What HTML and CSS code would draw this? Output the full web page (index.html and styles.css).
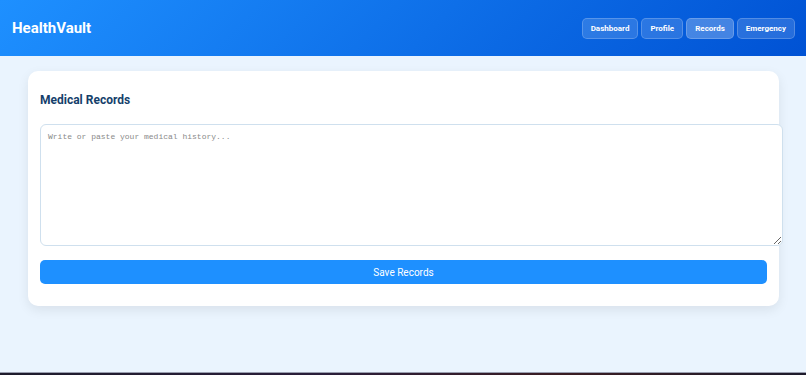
FILE: index.html
```html
<!DOCTYPE html>
<html lang="en">
<head>
    <meta charset="UTF-8">
    <meta name="viewport" content="width=device-width, initial-scale=1.0">
    <title>HealthVault - Records</title>
    <link rel="stylesheet" href="styles.css">
</head>
<body>
    <header class="topbar">
        <div class="logo">HealthVault</div>
        <nav class="nav">
            <button class="nav-btn">Dashboard</button>
            <button class="nav-btn">Profile</button>
            <button class="nav-btn active">Records</button>
            <button class="nav-btn">Emergency</button>
        </nav>
    </header>

    <main class="content">
        <section class="card">
            <h2>Medical Records</h2>
            <textarea id="records" placeholder="Write or paste your medical history..."></textarea>
            <button class="save-btn" id="saveBtn">Save Records</button>
        </section>
    </main>

    <footer class="footer"></footer>
</body>
</html>
```

FILE: styles.css
```css
body {
    font-family: Roboto, "Liberation Sans", Arial, sans-serif;
    background-color: #eaf4fe;
    margin: 0;
    padding: 0;
}

.topbar {
    height: 56px;
    display: flex;
    align-items: center;
    justify-content: space-between;
    padding: 0 11px 0 12px;
    background: linear-gradient(135deg, #1e90ff, #0052d4);
}

.logo {
    color: #fff;
    font-size: 15px;
    font-weight: bold;
}

.nav {
    display: flex;
    gap: 3px;
}

.nav-btn {
    height: 21px;
    padding: 0 8px;
    border: 1px solid rgba(255, 255, 255, 0.2);
    border-radius: 5px;
    background-color: rgba(255, 255, 255, 0.15);
    color: #fff;
    font-family: Roboto, "Liberation Sans", Arial, sans-serif;
    font-size: 8px;
    font-weight: bold;
    cursor: pointer;
}

.nav-btn.active {
    background-color: rgba(255, 255, 255, 0.26);
}

.content {
    height: 301px;
    padding: 15px 27px 0 28px;
}

.card {
    background-color: #fff;
    border-radius: 10px;
    padding: 12px 12px 22px;
    box-shadow: 0 4px 12px rgba(0, 0, 0, 0.08);
}

.card h2 {
    margin: 10px 0 16px;
    font-size: 12px;
    line-height: 15px;
    color: #153f6b;
}

textarea {
    display: block;
    width: 100%;
    height: 106px;
    padding: 7px;
    border: 1px solid #cfe0ee;
    border-radius: 6px;
    font-family: "Liberation Mono", "Courier New", monospace;
    font-size: 8px;
    color: #333;
    resize: vertical;
}

textarea::placeholder {
    color: #8a8a8a;
}

.save-btn {
    display: block;
    width: 100%;
    height: 24px;
    margin-top: 14px;
    border: none;
    border-radius: 5px;
    background-color: #1e90ff;
    color: #fff;
    font-family: Roboto, "Liberation Sans", Arial, sans-serif;
    font-size: 10px;
    cursor: pointer;
}

.footer {
    height: 10px;
    border-top: 1px solid #9a9fb0;
    background: linear-gradient(90deg, #1e1b2c, #2a1e3a 40%, #3a1c22 70%, #1e1b2c);
}
```
